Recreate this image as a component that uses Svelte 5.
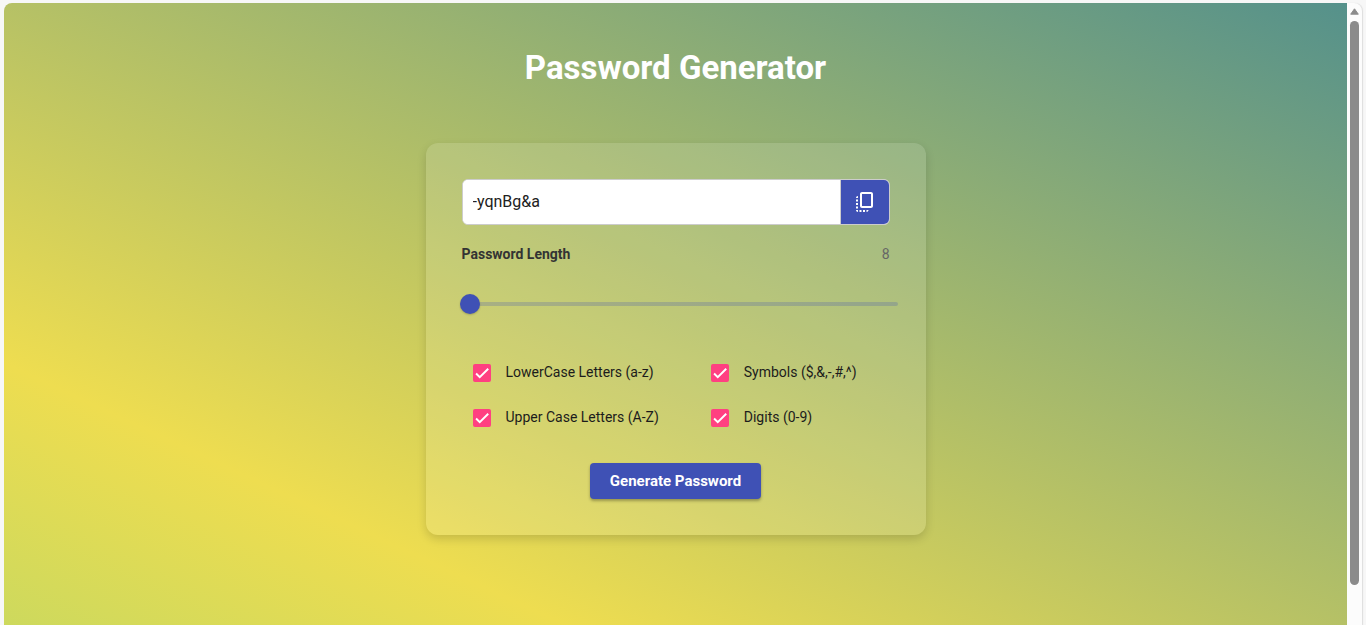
<script>
  const lower = 'abcdefghijklmnopqrstuvwxyz';
  let options = $state([
    { id: 'lower', label: 'LowerCase Letters (a-z)', chars: lower, checked: true },
    { id: 'symbols', label: 'Symbols ($,&,-,#,^)', chars: '$&-#^', checked: true },
    { id: 'upper', label: 'Upper Case Letters (A-Z)', chars: lower.toUpperCase(), checked: true },
    { id: 'digits', label: 'Digits (0-9)', chars: '0123456789', checked: true }
  ]);
  let length = $state(8);
  let password = $state('-yqnBg&a');

  function generate() {
    const pool = options.filter((o) => o.checked).map((o) => o.chars).join('');
    if (!pool) return;
    password = Array.from({ length }, () => pool[Math.floor(Math.random() * pool.length)]).join('');
  }

  function copy() {
    navigator.clipboard?.writeText(password);
  }
</script>

<div class="window">
  <main class="page">
    <h1>Password Generator</h1>
    <section class="card">
      <div class="result">
        <input class="password" type="text" aria-label="Password" readonly value={password} />
        <button class="copy" type="button" aria-label="Copy password" onclick={copy}>
          <svg viewBox="0 0 24 24" width="24" height="24" fill="currentColor" aria-hidden="true">
            <path d="M18 2H9c-1.1 0-2 .9-2 2v12c0 1.1.9 2 2 2h9c1.1 0 2-.9 2-2V4c0-1.1-.9-2-2-2zm0 14H9V4h9v12zM3 15v-2h2v2H3zm0-5.5h2v2H3v-2zM10 20h2v2h-2v-2zm-7-1.5v-2h2v2H3zM5 22c-1.1 0-2-.9-2-2h2v2zm3.5 0h-2v-2h2v2zm5 0v-2h2c0 1.1-.9 2-2 2zM5 6v2H3c0-1.1.9-2 2-2z" />
          </svg>
        </button>
      </div>
      <div class="length">
        <label for="length">Password Length</label>
        <output for="length">{length}</output>
      </div>
      <input class="slider" id="length" type="range" min="8" max="32" bind:value={length} />
      <div class="options">
        {#each options as option (option.id)}
          <div class="option">
            <input type="checkbox" id={option.id} bind:checked={option.checked} />
            <label for={option.id}>{option.label}</label>
          </div>
        {/each}
      </div>
      <button class="generate" type="button" onclick={generate}>Generate Password</button>
    </section>
  </main>
  <div class="scrollbar" aria-hidden="true">
    <svg viewBox="0 0 9 7" width="9" height="7"><path d="M4.5 0.8 8.3 6.2H.7z" fill="#8b8b8b" stroke="#8b8b8b" stroke-linejoin="round" /></svg>
    <div class="thumb"></div>
  </div>
</div>

<style>
  :global(body) {
    margin: 0;
    background: #f7f7f7;
    font-family: Roboto, sans-serif;
  }
  .window {
    box-sizing: border-box;
    min-height: 100vh;
    display: flex;
    padding: 3px 4px 0;
  }
  .page {
    flex: 1;
    display: flex;
    flex-direction: column;
    align-items: center;
    gap: 55px;
    padding: 45px 16px 0;
    border-top-left-radius: 8px;
    background: linear-gradient(25deg, #cdd95d, #eedd50 21%, #55918b);
  }
  h1 {
    margin: 0;
    color: #fff;
    font-size: 33px;
    line-height: 40px;
    font-weight: 700;
  }
  .card {
    box-sizing: border-box;
    width: 100%;
    max-width: 500px;
    padding: 36px;
    display: flex;
    flex-direction: column;
    border-radius: 12px;
    background: rgba(255, 255, 255, 0.12);
    box-shadow: 0 4px 10px rgba(0, 0, 0, 0.15);
  }
  .result {
    display: flex;
    height: 44px;
    border: 1px solid #ccc;
    border-radius: 6px;
    overflow: hidden;
    background: #fff;
  }
  .password {
    flex: 1;
    min-width: 0;
    padding: 0 10px 2px;
    border: 0;
    background: #fff;
    color: #212121;
    font: 400 16px Roboto, sans-serif;
    outline: 0;
  }
  .copy {
    width: 49px;
    display: grid;
    place-items: center;
    padding: 0;
    border: 0;
    border-left: 1px solid #ccc;
    background: #3f51b5;
    color: #fff;
    cursor: pointer;
  }
  .length {
    display: flex;
    justify-content: space-between;
    margin-top: 19px;
    font-size: 14px;
    line-height: 20px;
  }
  .length label {
    color: #333;
    font-weight: 700;
  }
  .length output {
    color: #666;
  }
  .slider {
    appearance: none;
    width: calc(100% + 10px);
    height: 20px;
    margin: 30px 0 0 -2px;
    background: transparent;
  }
  .slider::-webkit-slider-runnable-track {
    height: 4px;
    border-radius: 2px;
    background: rgba(63, 81, 181, 0.24);
  }
  .slider::-webkit-slider-thumb {
    appearance: none;
    width: 20px;
    height: 20px;
    margin-top: -8px;
    border-radius: 50%;
    background: #3f51b5;
    box-shadow: 0 1px 2px rgba(0, 0, 0, 0.2);
  }
  .options {
    display: grid;
    grid-template-columns: 4fr 3fr;
    row-gap: 25px;
    margin: 48px 0 36px;
    padding-left: 11px;
  }
  .option {
    display: flex;
    align-items: flex-end;
    gap: 15px;
    color: #1c1c1c;
    font-size: 14px;
    line-height: 20px;
    white-space: nowrap;
  }
  .option input {
    appearance: none;
    width: 18px;
    height: 18px;
    margin: 0;
    border: 2px solid #666;
    border-radius: 2px;
  }
  .option input:checked {
    border: 0;
    background: #ff4081 url("data:image/svg+xml,%3Csvg xmlns='http://www.w3.org/2000/svg' viewBox='0 0 24 24'%3E%3Cpath fill='none' stroke='white' stroke-width='2.6' d='M4.1 12.7 9 17.6 20.3 6.3'/%3E%3C/svg%3E") center / 18px no-repeat;
  }
  .generate {
    align-self: center;
    height: 36px;
    padding: 0 20px;
    border: 0;
    border-radius: 4px;
    background: #3f51b5;
    color: #fff;
    font: 700 15px Roboto, sans-serif;
    box-shadow: 0 2px 3px rgba(0, 0, 0, 0.3);
    cursor: pointer;
  }
  .scrollbar {
    box-sizing: border-box;
    width: 15px;
    display: flex;
    flex-direction: column;
    align-items: center;
    gap: 6px;
    padding: 5px 0 40px;
    border-top-right-radius: 8px;
    background: #fcfcfc;
    box-shadow: 1px 0 1px #ddd;
  }
  .thumb {
    flex: 1;
    width: 9px;
    border-radius: 5px;
    background: #8b8b8b;
  }
</style>
